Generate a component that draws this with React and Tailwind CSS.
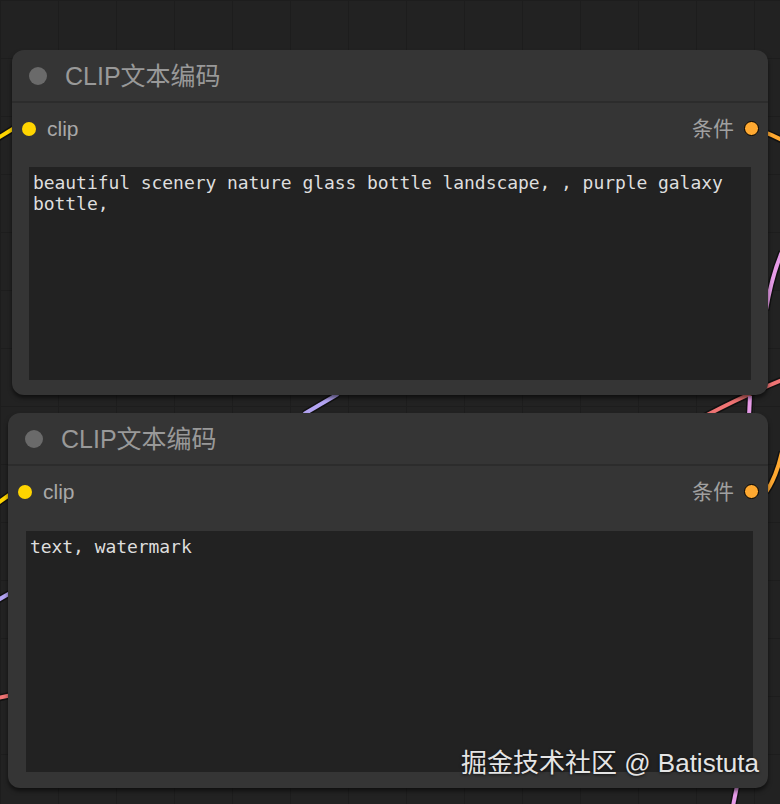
import React from "react";

const sans = { fontFamily: '"Liberation Sans", "Noto Sans CJK SC", sans-serif' };
const mono = { fontFamily: '"DejaVu Sans Mono", "Liberation Mono", monospace' };

function Node({ className, text, taClass }) {
  return (
    <div className={`absolute flex flex-col rounded-[12px] bg-[#353535] shadow-[0_3px_4px_rgba(0,0,0,0.55)] ${className}`} style={sans}>
      <div className="flex h-[53px] items-center border-b-2 border-[#2c2c2c] pl-[17px] pt-[1px]">
        <div className="h-[18px] w-[18px] rounded-full bg-[#6a6a6a]" />
        <div className="ml-[18px] text-[25px] leading-none text-[#999999]">CLIP文本编码</div>
      </div>
      <div className="flex h-[50px] items-center justify-between pl-[10px] pr-[9px] pt-[1px]">
        <div className="flex items-center">
          <div className="h-[14px] w-[14px] rounded-full bg-[#ffd500]" />
          <span className="ml-[11px] text-[21px] leading-none text-[#a8a8a8]">clip</span>
        </div>
        <div className="flex items-center">
          <span className="mr-[10px] text-[21px] leading-none text-[#a0a0a0]">条件</span>
          <div className="h-[15px] w-[15px] rounded-full border border-black bg-[#ffa931]" />
        </div>
      </div>
      <div className={`flex-1 bg-[#222222] px-[4px] pt-[5px] text-[18px] tracking-[-0.06px] leading-[21px] text-[#dedede] whitespace-pre-wrap ${taClass}`} style={mono}>
        {text}
      </div>
    </div>
  );
}

export default function App() {
  return (
    <div
      className="relative h-[804px] w-[780px] overflow-hidden bg-[#222222] bg-[linear-gradient(#1d1d1d_1px,transparent_1px),linear-gradient(90deg,#1d1d1d_1px,transparent_1px)] bg-[size:58px_58px]"
    >
      <svg className="absolute inset-0" width="780" height="804" viewBox="0 0 780 804">
        <g fill="none" strokeLinecap="butt">
          <g stroke="#111" strokeWidth="7">
            <path d="M-2 138 L16 127" />
            <path d="M-2 503 L12 493" />
            <path d="M-2 600 L12 592" />
            <path d="M-2 698 L12 695" />
            <path d="M304 414 L338 394" />
            <path d="M756 129 Q770 134 782 140" />
            <path d="M782 252 Q772 275 766 310" />
            <path d="M705 416 Q745 395 782 380" />
            <path d="M750 396 L749 416" />
            <path d="M766 492 Q776 478 782 452" />
            <path d="M733 806 L737 786" />
          </g>
          <g strokeWidth="4">
            <path d="M-2 138 L16 127" stroke="#ffd500" />
            <path d="M-2 503 L12 493" stroke="#ffd500" />
            <path d="M-2 600 L12 592" stroke="#b3a4f2" />
            <path d="M-2 698 L12 695" stroke="#f07474" />
            <path d="M304 414 L338 394" stroke="#b3a4f2" />
            <path d="M756 129 Q770 134 782 140" stroke="#ffa931" />
            <path d="M782 252 Q772 275 766 310" stroke="#e79be8" />
            <path d="M705 416 Q745 395 782 380" stroke="#f07474" />
            <path d="M750 396 L749 416" stroke="#e79be8" />
            <path d="M766 492 Q776 478 782 452" stroke="#ffa931" />
            <path d="M733 806 L737 786" stroke="#e79be8" />
          </g>
        </g>
      </svg>

      <Node
        className="left-[12px] top-[50px] h-[345px] w-[756px]"
        text="beautiful scenery nature glass bottle landscape, , purple galaxy bottle,"
        taClass="ml-[17px] mr-[17px] mb-[15px] mt-[14px]"
      />
      <Node
        className="left-[8px] top-[413px] h-[375px] w-[760px]"
        text="text, watermark"
        taClass="ml-[18px] mr-[15px] mb-[16px] mt-[15px]"
      />

      <div
        className="absolute left-[461px] top-[750px] text-[26px] leading-none text-[#e4e4e4] [text-shadow:0_1px_3px_rgba(0,0,0,0.7)]"
        style={sans}
      >
        掘金技术社区 @ Batistuta
      </div>
    </div>
  );
}
